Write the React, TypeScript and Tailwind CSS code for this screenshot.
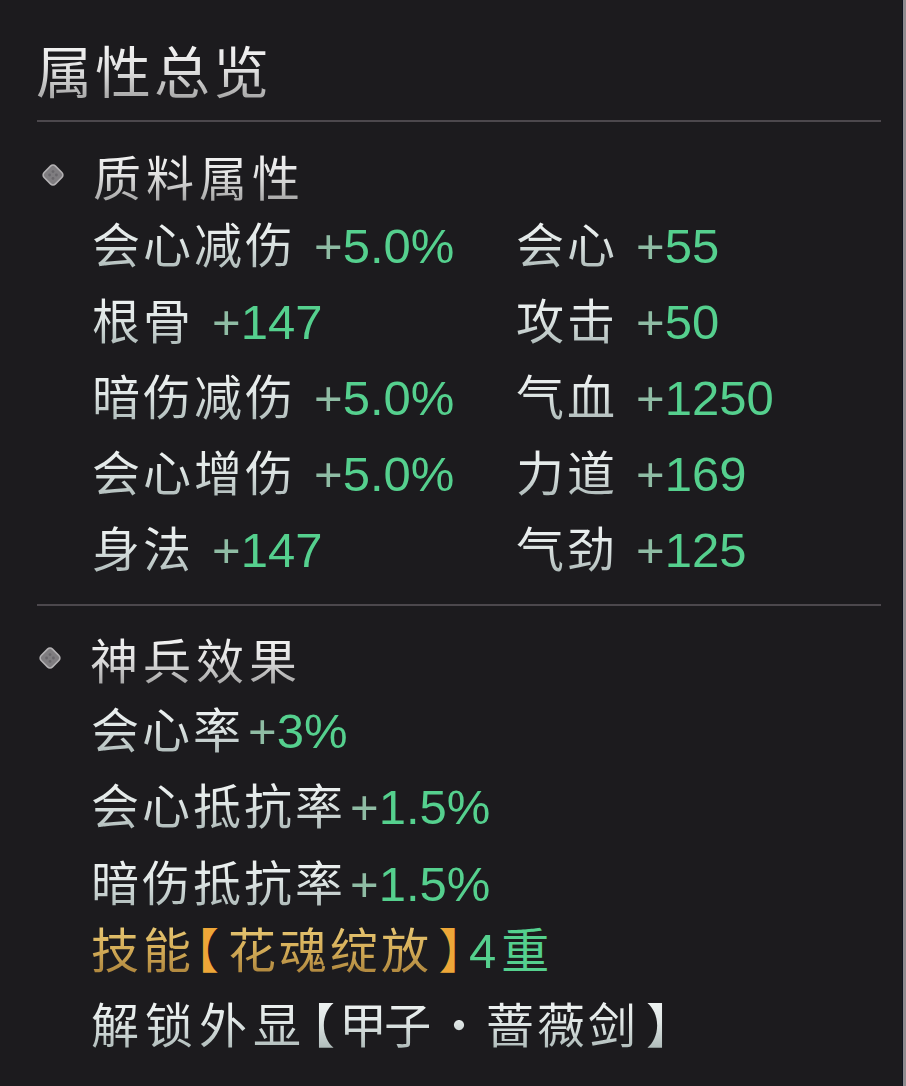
import React from "react";

const cjk = "font-['Noto_Sans_CJK_SC','Noto_Sans_CJK_JP',sans-serif]";
const num = "font-['Liberation_Sans',Arial,sans-serif]";

// Silver engraved label text
const silver =
  "inline-block bg-linear-to-b from-[#f6f8f8] via-[#dfe6e5] to-[#a9b6b4] bg-clip-text text-transparent";
const heading =
  "inline-block bg-linear-to-b from-[#f7f7f7] via-[#e2e2e2] to-[#a6a6a6] bg-clip-text text-transparent";
const gold =
  "inline-block bg-linear-to-b from-[#ecd07e] via-[#d7b05a] to-[#a9813a] bg-clip-text text-transparent";
const bracket = "inline-block text-center [font-feature-settings:'halt']";

function Diamond() {
  return (
    <svg width="24" height="24" viewBox="0 0 24 24" className="shrink-0">
      <rect
        x="4"
        y="4"
        width="16"
        height="16"
        rx="3.5"
        transform="rotate(45 12 12)"
        fill="#7f7d80"
        stroke="#b4b2b4"
        strokeWidth="1.6"
      />
      <circle cx="12" cy="8.6" r="1.4" fill="#69676b" />
      <circle cx="12" cy="15.4" r="1.4" fill="#69676b" />
      <circle cx="8.6" cy="12" r="1.4" fill="#69676b" />
      <circle cx="15.4" cy="12" r="1.4" fill="#69676b" />
    </svg>
  );
}

function Divider({ className }: { className: string }) {
  return <div className={`h-[2px] bg-[#4c484d] ${className}`} />;
}

function SectionHeading({ text, className }: { text: string; className: string }) {
  return (
    <div className={`flex h-[52px] items-center ${className}`}>
      <div className="ml-[4px]">
        <Diamond />
      </div>
      <span className={`ml-[28px] text-[48px] leading-[52px] tracking-[5px] ${cjk} ${heading}`}>
        {text}
      </span>
    </div>
  );
}

function Value({ v }: { v: string }) {
  return (
    <span className={`${num} text-[49px] leading-[60px]`}>
      <span className="text-[#8fbca4]">+</span>
      <span className="text-[#55d08e]">{v}</span>
    </span>
  );
}

function Stat({ label, value }: { label: string; value: string }) {
  return (
    <div className="flex h-[76px] items-center">
      <div className="flex items-baseline">
        <span className={`${cjk} ${silver} text-[48px] leading-[60px] tracking-[3px]`}>{label}</span>
        <span className="ml-[18px]">
          <Value v={value} />
        </span>
      </div>
    </div>
  );
}

const stats: [string, string][] = [
  ["会心减伤", "5.0%"],
  ["会心", "55"],
  ["根骨", "147"],
  ["攻击", "50"],
  ["暗伤减伤", "5.0%"],
  ["气血", "1250"],
  ["会心增伤", "5.0%"],
  ["力道", "169"],
  ["身法", "147"],
  ["气劲", "125"],
];

function Effect({ label, value, className }: { label: string; value: string; className: string }) {
  return (
    <div className={`flex h-[60px] items-center ${className}`}>
      <div className="flex items-baseline">
        <span className={`${cjk} ${silver} text-[48px] leading-[60px] tracking-[3px]`}>{label}</span>
        <span className="ml-[4px]">
          <Value v={value} />
        </span>
      </div>
    </div>
  );
}

export default function App() {
  return (
    <div className="flex min-h-[1086px] w-[906px] bg-[#1c1b1e]">
      <div className="flex-1 pl-[37px] pr-[21px] pt-[39px]">
        {/* Panel title */}
        <div
          className={`-ml-[1px] h-[60px] text-[56px] leading-[60px] tracking-[3px] ${cjk} ${heading}`}
        >
          属性总览
        </div>
        <Divider className="mt-[21px]" />

        {/* Material attributes */}
        <SectionHeading text="质料属性" className="mt-[27px]" />
        <div className="ml-[55px] mt-[5px] grid grid-cols-[424px_1fr]">
          {stats.map(([l, v]) => (
            <Stat key={l + v} label={l} value={v} />
          ))}
        </div>
        <Divider className="mt-[18px]" />

        {/* Divine weapon effects */}
        <SectionHeading text="神兵效果" className="mt-[26px] -ml-[3px]" />
        <div className="ml-[54px]">
          <Effect label="会心率" value="3%" className="mt-[15px]" />
          <Effect label="会心抵抗率" value="1.5%" className="mt-[16px]" />
          <Effect label="暗伤抵抗率" value="1.5%" className="mt-[17px]" />

          <div className="mt-[7px] flex h-[60px] items-center">
            <div className={`flex items-baseline ${cjk} text-[48px] leading-[60px]`}>
              <span className={`${gold} tracking-[4px]`}>技能</span>
              <span className={`${bracket} mr-[9px] w-[24px] text-[#eea738]`}>【</span>
              <span className={`${gold} tracking-[3px]`}>花魂绽放</span>
              <span className={`${bracket} w-[37px] text-[#eea738]`}>】</span>
              <span className={`${num} text-[49px] text-[#55d08e]`}>4</span>
              <span className="ml-[5px] text-[#55d08e]">重</span>
            </div>
          </div>

          <div className="mt-[13px] flex h-[60px] items-center">
            <div className={`flex items-baseline ${cjk} text-[48px] leading-[60px]`}>
              <span className={`${silver} tracking-[6px]`}>解锁外显</span>
              <span className={`${silver} ${bracket} w-[32px]`}>【</span>
              <span className={`${silver} tracking-[-3px]`}>甲子</span>
              <span className={`${silver} ml-[3px] w-[54px] text-center`}>·</span>
              <span className={`${silver} tracking-[3px]`}>蔷薇剑</span>
              <span className={`${silver} ${bracket} w-[38px]`}>】</span>
            </div>
          </div>
        </div>
      </div>

      {/* Frame edge */}
      <div className="w-[1px] bg-[#10131f]" />
      <div className="w-[3px] bg-[#8f8c90]" />
    </div>
  );
}
